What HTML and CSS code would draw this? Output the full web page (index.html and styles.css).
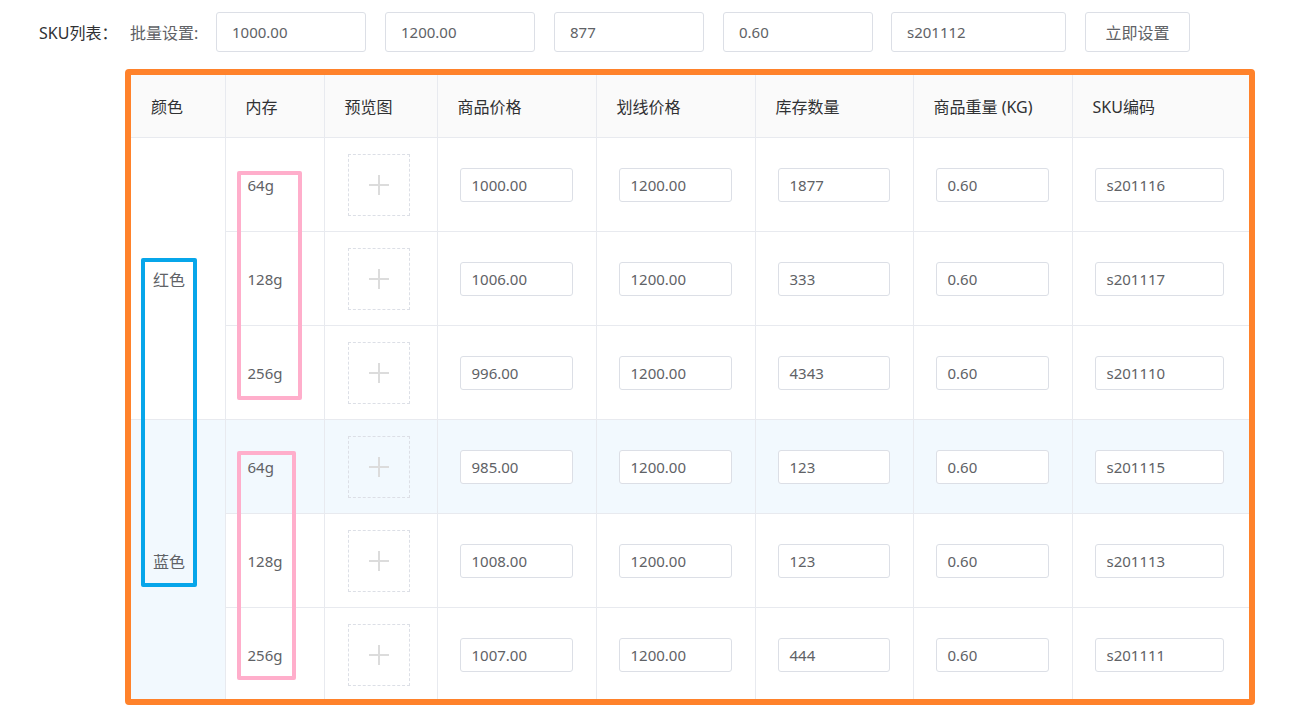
FILE: index.html
```html
<!DOCTYPE html>
<html lang="zh-CN">
<head>
<meta charset="utf-8">
<title>SKU列表</title>
<link rel="stylesheet" href="styles.css">
</head>
<body>
<div class="toolbar">
  <span class="title">SKU列表：</span>
  <span class="batch">批量设置:</span>
  <div class="field w150">1000.00</div>
  <div class="field w150">1200.00</div>
  <div class="field w150">877</div>
  <div class="field w150 tight">0.60</div>
  <div class="field w175">s201112</div>
  <button class="btn">立即设置</button>
</div>

<div class="frame">
  <table class="sku">
    <colgroup>
      <col style="width:94px"><col style="width:99px"><col style="width:113px"><col style="width:159px"><col style="width:159px"><col style="width:158px"><col style="width:159px"><col style="width:177px">
    </colgroup>
    <thead>
      <tr><th>颜色</th><th>内存</th><th>预览图</th><th>商品价格</th><th>划线价格</th><th>库存数量</th><th>商品重量 (KG)</th><th>SKU编码</th></tr>
    </thead>
    <tbody>
      <tr>
        <td rowspan="3" class="color">红色</td><td>64g</td>
        <td><div class="upload"><svg viewBox="0 0 20 20" width="20" height="20"><path d="M10 0v20M0 10h20" stroke="#dcdcdc" stroke-width="2"/></svg></div></td>
        <td><div class="cin">1000.00</div></td><td><div class="cin">1200.00</div></td><td><div class="cin">1877</div></td><td><div class="cin">0.60</div></td><td><div class="cin">s201116</div></td>
      </tr>
      <tr>
        <td>128g</td>
        <td><div class="upload"><svg viewBox="0 0 20 20" width="20" height="20"><path d="M10 0v20M0 10h20" stroke="#dcdcdc" stroke-width="2"/></svg></div></td>
        <td><div class="cin">1006.00</div></td><td><div class="cin">1200.00</div></td><td><div class="cin">333</div></td><td><div class="cin">0.60</div></td><td><div class="cin">s201117</div></td>
      </tr>
      <tr>
        <td>256g</td>
        <td><div class="upload"><svg viewBox="0 0 20 20" width="20" height="20"><path d="M10 0v20M0 10h20" stroke="#dcdcdc" stroke-width="2"/></svg></div></td>
        <td><div class="cin">996.00</div></td><td><div class="cin">1200.00</div></td><td><div class="cin">4343</div></td><td><div class="cin">0.60</div></td><td><div class="cin">s201110</div></td>
      </tr>
      <tr class="hover">
        <td rowspan="3" class="color hovercell">蓝色</td><td>64g</td>
        <td><div class="upload"><svg viewBox="0 0 20 20" width="20" height="20"><path d="M10 0v20M0 10h20" stroke="#dcdcdc" stroke-width="2"/></svg></div></td>
        <td><div class="cin">985.00</div></td><td><div class="cin">1200.00</div></td><td><div class="cin">123</div></td><td><div class="cin">0.60</div></td><td><div class="cin">s201115</div></td>
      </tr>
      <tr>
        <td>128g</td>
        <td><div class="upload"><svg viewBox="0 0 20 20" width="20" height="20"><path d="M10 0v20M0 10h20" stroke="#dcdcdc" stroke-width="2"/></svg></div></td>
        <td><div class="cin">1008.00</div></td><td><div class="cin">1200.00</div></td><td><div class="cin">123</div></td><td><div class="cin">0.60</div></td><td><div class="cin">s201113</div></td>
      </tr>
      <tr>
        <td>256g</td>
        <td><div class="upload"><svg viewBox="0 0 20 20" width="20" height="20"><path d="M10 0v20M0 10h20" stroke="#dcdcdc" stroke-width="2"/></svg></div></td>
        <td><div class="cin">1007.00</div></td><td><div class="cin">1200.00</div></td><td><div class="cin">444</div></td><td><div class="cin">0.60</div></td><td><div class="cin">s201111</div></td>
      </tr>
    </tbody>
  </table>
</div>

<div class="mark blue"></div>
<div class="mark pink p1"></div>
<div class="mark pink p2"></div>
</body>
</html>
```

FILE: styles.css
```css
html, body {
  margin: 0;
  padding: 0;
  background: #ffffff;
}
body {
  position: relative;
  width: 1303px;
  height: 725px;
  overflow: hidden;
  font-family: "Noto Sans", "Noto Sans CJK SC", sans-serif;
  font-size: 15px;
  color: #606266;
}
.toolbar {
  display: flex;
  align-items: center;
  height: 40px;
  padding: 12px 0 0 39px;
}
.title {
  color: #303133;
  font-size: 16px;
  width: 91px;
}
.batch {
  color: #606266;
  font-size: 16px;
  width: 86px;
}
.field {
  box-sizing: border-box;
  height: 40px;
  line-height: 38px;
  border: 1px solid #dcdfe6;
  border-radius: 3px;
  padding-left: 15px;
  margin-right: 19px;
  color: #606266;
}
.field.tight { margin-right: 18px; }
.w150 { width: 150px; }
.w175 { width: 175px; }
.btn {
  box-sizing: border-box;
  width: 105px;
  height: 40px;
  border: 1px solid #dcdfe6;
  border-radius: 3px;
  background: #fff;
  font-family: inherit;
  font-size: 16px;
  color: #606266;
  padding: 0;
}
.frame {
  margin: 17px 0 0 125px;
  width: 1118px;
  height: 624px;
  border: 6px solid #ff822b;
  border-radius: 4px;
  overflow: hidden;
  background: #fff;
}
.sku {
  table-layout: fixed;
  border-collapse: collapse;
  width: 1118px;
}
.sku th, .sku td {
  border-right: 1px solid #e8eaef;
  border-bottom: 1px solid #e8eaef;
  text-align: left;
  padding: 0 0 0 22px;
}
.sku th {
  height: 62px;
  background: #fafafa;
  color: #303133;
  font-weight: normal;
  font-size: 16px;
  padding-left: 20px;
}
.sku td {
  height: 93px;
}
.sku td.color {
  font-size: 16px;
}
.sku tr.hover td, .sku td.hovercell {
  background: #f2f9fe;
}
.cin {
  box-sizing: border-box;
  height: 34px;
  line-height: 32px;
  margin-right: 23px;
  border: 1px solid #dcdfe6;
  border-radius: 3px;
  padding-left: 11px;
  background: #fff;
  color: #606266;
}
.sku td:last-child .cin {
  margin-right: 25px;
}
.upload {
  box-sizing: border-box;
  width: 62px;
  height: 62px;
  margin-left: 1px;
  border: 1px dashed #dcdfe6;
  display: flex;
  align-items: center;
  justify-content: center;
}
.mark {
  position: absolute;
  box-sizing: border-box;
  border-radius: 2px;
}
.blue {
  left: 141px;
  top: 258px;
  width: 56px;
  height: 329px;
  border: 4px solid #07a6ea;
}
.pink {
  border: 4px solid #ffaecb;
}
.p1 {
  left: 237px;
  top: 171px;
  width: 65px;
  height: 229px;
}
.p2 {
  left: 237px;
  top: 451px;
  width: 59px;
  height: 229px;
}
```
